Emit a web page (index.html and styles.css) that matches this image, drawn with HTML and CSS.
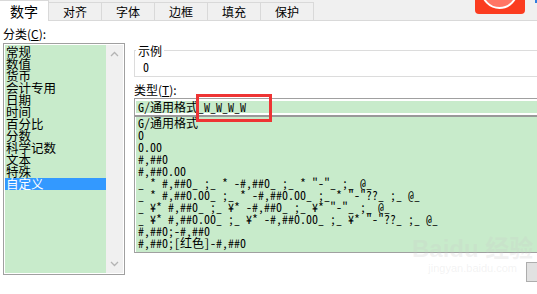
FILE: index.html
```html
<!DOCTYPE html>
<html lang="zh-CN">
<head>
<meta charset="utf-8">
<title>设置单元格格式</title>
<link rel="stylesheet" href="styles.css">
</head>
<body>
<div class="tabbar">
  <div class="tab active">数字</div>
  <div class="tab">对齐</div>
  <div class="tab">字体</div>
  <div class="tab">边框</div>
  <div class="tab">填充</div>
  <div class="tab">保护</div>
</div>
<div class="content">
  <div class="left">
    <div class="label">分类(<u>C</u>):</div>
    <div class="catlist">
      <ul class="items">
        <li>常规</li>
        <li>数值</li>
        <li>货币</li>
        <li>会计专用</li>
        <li>日期</li>
        <li>时间</li>
        <li>百分比</li>
        <li>分数</li>
        <li>科学记数</li>
        <li>文本</li>
        <li>特殊</li>
        <li class="selected">自定义</li>
      </ul>
      <div class="scrollbar">
        <svg width="9" height="6" viewBox="0 0 9 6"><path d="M1 5 L4.5 1.5 L8 5" fill="none" stroke="#b4b4b4" stroke-width="1.3"/></svg>
        <svg width="9" height="6" viewBox="0 0 9 6"><path d="M1 1 L4.5 4.5 L8 1" fill="none" stroke="#b4b4b4" stroke-width="1.3"/></svg>
      </div>
    </div>
  </div>
  <div class="right">
    <fieldset class="sample">
      <legend>示例</legend>
      <div class="sample-value">0</div>
    </fieldset>
    <div class="label type-label">类型(<u>T</u>):</div>
    <div class="typeinput"><div class="typefield">G/通用格式_W_W_W_W</div></div>
    <ul class="typelist">
      <li>G/通用格式</li>
      <li>0</li>
      <li>0.00</li>
      <li>#,##0</li>
      <li>#,##0.00</li>
      <li>_ * #,##0_ ;_ * -#,##0_ ;_ * "-"_ ;_ @_</li>
      <li>_ * #,##0.00_ ;_ * -#,##0.00_ ;_ * "-"??_ ;_ @_</li>
      <li>_ ¥* #,##0_ ;_ ¥* -#,##0_ ;_ ¥* "-"_ ;_ @_</li>
      <li>_ ¥* #,##0.00_ ;_ ¥* -#,##0.00_ ;_ ¥* "-"??_ ;_ @_</li>
      <li>#,##0;-#,##0</li>
      <li>#,##0;[红色]-#,##0</li>
    </ul>
    <div class="actions"><button class="btn">删除(D)</button></div>
  </div>
</div>
<div class="hint">以现有格式为基础，生成自定义的数字格式。</div>

<div class="highlight"></div>
<div class="badge"><span class="badge-ring"></span></div>
<div class="speck"></div>
<div class="watermark"><span class="wm-big">Bai<b>du</b> 经验</span><span class="wm-small">jingyan.baidu.com</span></div>
</body>
</html>
```
FILE: styles.css
```css
html, body {
  margin: 0;
  padding: 0;
}
body {
  width: 537px;
  height: 294px;
  overflow: hidden;
  background: #ffffff;
  color: #000;
  font-family: "Noto Sans CJK SC", "Noto Sans", sans-serif;
  font-size: 12px;
  position: relative;
}
u { text-decoration: underline; }

.tabbar {
  display: flex;
  align-items: flex-end;
  height: 20px;
  background: #f0f0f0;
  border-bottom: 1px solid #d9d9d9;
}
.tab {
  box-sizing: border-box;
  width: 53px;
  height: 18px;
  border: 1px solid #d9d9d9;
  border-bottom: none;
  border-left: none;
  display: flex;
  align-items: center;
  justify-content: center;
  font-size: 12px;
  line-height: 12px;
  padding-top: 1px;
}
.tab.active {
  width: 49px;
  height: 21px;
  margin-bottom: -1px;
  background: #ffffff;
  font-size: 14px;
  line-height: 14px;
  padding-top: 0;
}

.content {
  display: flex;
  gap: 9px;
  padding: 5px 0 0 3px;
}
.left {
  width: 122px;
  flex: none;
}
.label {
  line-height: 16px;
  height: 16px;
  margin-bottom: 1px;
  font-size: 12px;
}
.catlist {
  box-sizing: border-box;
  height: 232px;
  border: 1px solid #a0a0a0;
  padding: 1px;
  display: flex;
  background: #fff;
}
.items {
  list-style: none;
  margin: 0;
  padding: 1px 0 0 0;
  flex: 1;
  background: #c8ebcb;
}
.items li {
  height: 12px;
  line-height: 12px;
  font-size: 12.5px;
  padding-left: 1px;
  white-space: nowrap;
}
.items li.selected {
  background: #3399ff;
  color: #fff;
}
.scrollbar {
  width: 17px;
  background: #f0f0f0;
  display: flex;
  flex-direction: column;
  justify-content: space-between;
  align-items: center;
  padding: 6px 0 6px;
}

.right {
  flex: 1;
  min-width: 0;
}
.sample {
  margin: 18px 0 0 0;
  padding: 2px 8px 2px 8px;
  border: 1px solid #dcdcdc;
  border-right: none;
}
.sample legend {
  padding: 0 2px;
  margin-left: -7px;
  line-height: 13px;
  font-size: 12px;
}
.sample-value {
  line-height: 15px;
  font-family: "Noto Sans Mono CJK SC", "Liberation Mono", monospace;
}
.type-label {
  margin-top: 6px;
  line-height: 14px;
  height: 14px;
  margin-bottom: 1px;
}
.typeinput {
  border-top: 1px solid #a0a0a0;
  border-left: 1px solid #a0a0a0;
  padding: 2px 0 2px 1px;
  background: #fff;
}
.typefield {
  background: #c8ebcb;
  height: 12px;
  line-height: 12px;
  padding-left: 2px;
  white-space: nowrap;
  font-family: "Noto Sans Mono CJK SC", "Noto Sans CJK SC", monospace;
}
.typelist {
  list-style: none;
  margin: 0;
  padding: 0 0 1px 2px;
  height: 134px;
  border-top: 2px solid #999999;
  border-left: 1px solid #a0a0a0;
  border-bottom: 1px solid #a0a0a0;
  background: #c8ebcb;
  box-shadow: inset 1px 0 0 #ffffff;
  font-family: "Noto Sans Mono CJK SC", "Noto Sans CJK SC", monospace;
}
.typelist li {
  height: 12px;
  line-height: 12px;
  white-space: pre;
  padding-left: 1px;
}
.actions {
  display: flex;
  justify-content: flex-end;
  margin-top: 9px;
}
.btn {
  box-sizing: border-box;
  width: 71px;
  height: 20px;
  margin-right: -60px;
  background: #e1e1e1;
  border: 1px solid #adadad;
  font-family: inherit;
  font-size: 12px;
  padding: 0;
}
.hint {
  margin-top: 13px;
  padding-left: 9px;
  line-height: 14px;
  font-size: 12px;
  white-space: nowrap;
}

/* overlays */
.highlight {
  position: absolute;
  left: 196px;
  top: 94px;
  width: 76px;
  height: 28px;
  box-sizing: border-box;
  border: 3px solid #ee3434;
}
.badge {
  position: absolute;
  left: 475px;
  top: 0;
  width: 50px;
  height: 14px;
  background: #fb3c20;
  border-radius: 0 0 4px 4px;
  overflow: hidden;
}
.badge-ring {
  position: absolute;
  left: 6px;
  top: -28px;
  width: 33px;
  height: 33px;
  border-radius: 50%;
  background: #ff7565;
  border: 2px solid #ffffff;
}
.speck {
  position: absolute;
  left: 535px;
  top: 0;
  width: 2px;
  height: 3px;
  background: #2f7fe0;
}
.watermark {
  position: absolute;
  left: 412px;
  top: 236px;
  display: flex;
  flex-direction: column;
  align-items: center;
  color: rgba(200, 200, 200, 0.22);
  font-family: "Liberation Sans", "Noto Sans CJK SC", sans-serif;
  pointer-events: none;
}
.wm-big {
  font-size: 24px;
  line-height: 26px;
  font-weight: bold;
}
.wm-big b {
  font-weight: bold;
}
.wm-small {
  font-size: 11px;
  line-height: 12px;
}
```
